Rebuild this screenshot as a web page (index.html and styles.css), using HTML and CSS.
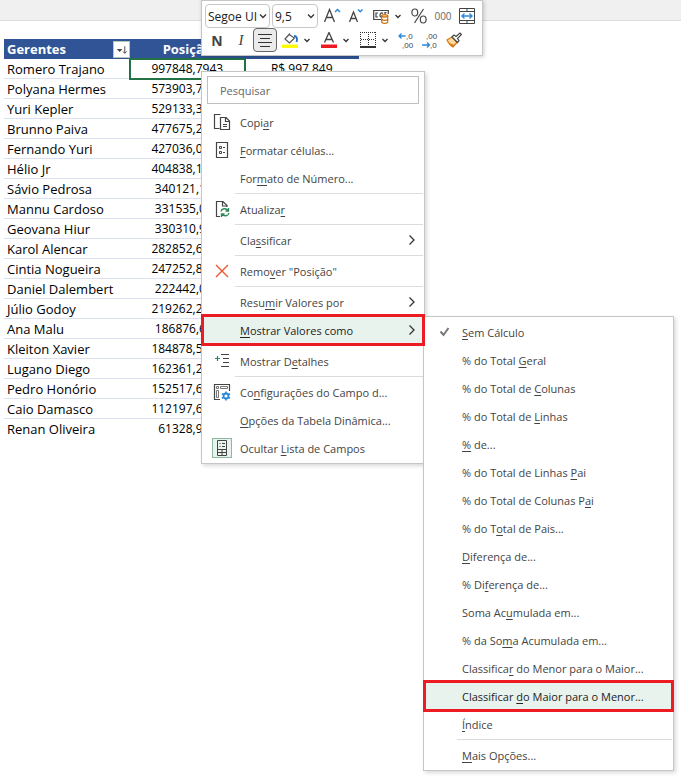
FILE: index.html
```html
<!DOCTYPE html>
<html lang="pt-BR">
<head>
  <meta charset="UTF-8">
  <title>Tabela Dinâmica</title>
  <link rel="stylesheet" href="styles.css">
</head>
<body>

  <div class="ribbon"></div>

  <table class="pivot">
    <thead>
      <tr>
        <th>
          <div class="head">
            Gerentes
            <button type="button" class="filter" aria-label="Filtrar">
              <svg width="16" height="16" viewBox="0 0 16 16"><path d="M3 7h6L6 10z" fill="#444"/><path d="M11.500 4v7.500M9.500 9.500l2 2 2-2" fill="none" stroke="#444"/></svg>
            </button>
          </div>
        </th>
        <th class="num">Posição</th>
        <th class="num">Valor</th>
      </tr>
    </thead>
    <tbody>
      <tr><td>Romero Trajano</td><td class="num selected">997848,7943</td><td class="num">R$ 997.849</td></tr>
      <tr><td>Polyana Hermes</td><td class="num">573903,7000</td><td></td></tr>
      <tr><td>Yuri Kepler</td><td class="num">529133,3000</td><td></td></tr>
      <tr><td>Brunno Paiva</td><td class="num">477675,2000</td><td></td></tr>
      <tr><td>Fernando Yuri</td><td class="num">427036,0000</td><td></td></tr>
      <tr><td>Hélio Jr</td><td class="num">404838,1000</td><td></td></tr>
      <tr><td>Sávio Pedrosa</td><td class="num">340121,100</td><td></td></tr>
      <tr><td>Mannu Cardoso</td><td class="num">331535,000</td><td></td></tr>
      <tr><td>Geovana Hiur</td><td class="num">330310,900</td><td></td></tr>
      <tr><td>Karol Alencar</td><td class="num">282852,6000</td><td></td></tr>
      <tr><td>Cintia Nogueira</td><td class="num">247252,8000</td><td></td></tr>
      <tr><td>Daniel Dalembert</td><td class="num">222442,000</td><td></td></tr>
      <tr><td>Júlio Godoy</td><td class="num">219262,2000</td><td></td></tr>
      <tr><td>Ana Malu</td><td class="num">186876,600</td><td></td></tr>
      <tr><td>Kleiton Xavier</td><td class="num">184878,5000</td><td></td></tr>
      <tr><td>Lugano Diego</td><td class="num">162361,2000</td><td></td></tr>
      <tr><td>Pedro Honório</td><td class="num">152517,6000</td><td></td></tr>
      <tr><td>Caio Damasco</td><td class="num">112197,6000</td><td></td></tr>
      <tr><td>Renan Oliveira</td><td class="num">61328,900</td><td></td></tr>
    </tbody>
  </table>

  <!-- Mini barra de ferramentas -->
  <div class="toolbar">
    <div class="tools">
      <div class="combo font">
        <select aria-label="Fonte"><option>Segoe UI</option></select>
        <svg width="8" height="8" viewBox="0 0 8 8"><path class="arrow" d="M1 2.500l3 3 3-3"/></svg>
      </div>
      <div class="combo size">
        <select aria-label="Tamanho da fonte"><option>9,5</option></select>
        <svg width="8" height="8" viewBox="0 0 8 8"><path class="arrow" d="M1 2.500l3 3 3-3"/></svg>
      </div>
      <button type="button" class="tool" aria-label="Aumentar fonte">
        <svg width="18" height="18" viewBox="0 0 18 18"><path d="M1.500 15L6.500 2.500l5 12.500M3.500 10.500h6.500" fill="none" stroke="#444" stroke-width="1.300"/><path d="M12 5l2.500-2.500L17 5" fill="none" stroke="#2b88d8" stroke-width="1.500"/></svg>
      </button>
      <button type="button" class="tool" aria-label="Diminuir fonte">
        <svg width="18" height="18" viewBox="0 0 18 18"><path d="M2.500 15L6.500 5l4 10M4 11.500h5" fill="none" stroke="#444" stroke-width="1.300"/><path d="M11 2.500l2.200 2.200L15.500 2.500" fill="none" stroke="#2b88d8" stroke-width="1.500"/></svg>
      </button>
      <button type="button" class="tool split" aria-label="Formato de contabilização">
        <svg width="16" height="16" viewBox="0 0 16 16"><path d="M8 11.500H.7v-9h14.600V6" fill="none" stroke="#444" stroke-width="1.200"/><path d="M5 5H3v4h2M10 5.500C9 4.500 7 5 7 7s1 2.500 1.500 2M12 6V4.500h1.500" fill="none" stroke="#444" stroke-width="1.200"/><path d="M8.700 7.800v6c0 2 6 2 6 0v-6" fill="#fff" stroke="#c8700a" stroke-width="1.200"/><ellipse cx="11.700" cy="7.800" rx="3" ry="1.300" fill="#f7c27a" stroke="#c8700a" stroke-width="1.200"/><path d="M8.700 11c0 1.700 6 1.700 6 0" fill="none" stroke="#c8700a" stroke-width="1.200"/></svg>
        <svg width="8" height="8" viewBox="0 0 8 8"><path class="arrow" d="M1.500 3L4 5.500 6.500 3"/></svg>
      </button>
      <button type="button" class="tool" aria-label="Porcentagem">
        <svg width="18" height="18" viewBox="0 0 18 18" fill="none" stroke="#444" stroke-width="1.200"><ellipse cx="4.800" cy="5.500" rx="2.900" ry="3.500"/><ellipse cx="13.200" cy="12.500" rx="2.900" ry="3.500"/><path d="M13.500 2L4.500 16"/></svg>
      </button>
      <button type="button" class="tool zeros">000</button>
      <button type="button" class="tool" aria-label="Mesclar e centralizar">
        <svg width="16" height="16" viewBox="0 0 16 16" fill="none"><path d="M.5.500h15v15H.5zM.5 3.500h15M.5 12.500h15M8 .5v3M8 12.500v3" stroke="#444"/><path d="M3 8h10M5.500 5.500L3 8l2.500 2.500M10.500 5.500L13 8l-2.500 2.500" stroke="#2b88d8" stroke-width="1.400"/></svg>
      </button>
    </div>
    <div class="tools">
      <button type="button" class="tool bold">N</button>
      <button type="button" class="tool italic">I</button>
      <button type="button" class="tool pressed" aria-label="Centralizar" aria-pressed="true">
        <svg width="16" height="16" viewBox="0 0 16 16" stroke="#333"><path d="M1 2.500h14M3 6.500h10M1 10.500h14M3 14.500h10"/></svg>
      </button>
      <button type="button" class="tool split" aria-label="Cor de preenchimento">
        <svg width="16" height="16" viewBox="0 0 16 16"><path d="M8 1.500L3 7l4.500 4L12.500 6 7 2.500" fill="none" stroke="#555" stroke-width="1.200"/><path d="M12 4c3 0 3.500 3 2.500 6" fill="none" stroke="#1f6fc0" stroke-width="1.800"/><path d="M0 12.500h16V16H0z" fill="#ff0"/></svg>
        <svg width="8" height="8" viewBox="0 0 8 8"><path class="arrow" d="M1.500 3L4 5.500 6.500 3"/></svg>
      </button>
      <button type="button" class="tool split" aria-label="Cor da fonte">
        <svg width="16" height="16" viewBox="0 0 16 16"><path d="M3.500 10.500L8 .5l4.500 10M5 7.500h6" fill="none" stroke="#444" stroke-width="1.300"/><path d="M0 12.500h16V16H0z" fill="#ed1c24"/></svg>
        <svg width="8" height="8" viewBox="0 0 8 8"><path class="arrow" d="M1.500 3L4 5.500 6.500 3"/></svg>
      </button>
      <button type="button" class="tool split" aria-label="Bordas">
        <svg width="16" height="16" viewBox="0 0 16 16" fill="none" stroke="#333"><path d="M0 .5h16M.5 0v14M15.500 0v14M8.500 2v12M1 7.500h14" stroke-dasharray="1 1"/><path d="M0 15h16" stroke="#000" stroke-width="1.600"/></svg>
        <svg width="8" height="8" viewBox="0 0 8 8"><path class="arrow" d="M1.500 3L4 5.500 6.500 3"/></svg>
      </button>
      <button type="button" class="tool" aria-label="Aumentar casas decimais">
        <svg class="decimals" width="18" height="20" viewBox="0 0 18 20"><text x="9" y="9">,0</text><text x="5" y="18">,00</text><path d="M8.500 6H2M4.500 3.500L2 6l2.500 2.500" fill="none" stroke="#2b88d8" stroke-width="1.300"/></svg>
      </button>
      <button type="button" class="tool" aria-label="Diminuir casas decimais">
        <svg class="decimals" width="18" height="20" viewBox="0 0 18 20"><text x="5" y="9">,00</text><text x="9" y="18">,0</text><path d="M1 15h7.500M6 12.500L8.500 15 6 17.500" fill="none" stroke="#2b88d8" stroke-width="1.300"/></svg>
      </button>
      <button type="button" class="tool" aria-label="Pincel de formatação">
        <svg width="16" height="16" viewBox="0 0 16 16"><path d="M1 8l5-3 5 5.500-4 4.500c-2-1-4-3-6-7z" fill="#fbd9a5" stroke="#d87a12" stroke-width="1.300"/><path d="M3.500 11l5 2-2 2z" fill="#d87a12"/><path d="M6 4.800l5.500 5.700 1.500-2-1.500-2L15.500 2.500 14 1l-4 3.500L8 3z" fill="#fff" stroke="#444" stroke-width="1.200"/></svg>
      </button>
    </div>
  </div>

  <!-- Menu de contexto -->
  <div class="menu context">
    <input type="text" class="search" placeholder="Pesquisar" aria-label="Pesquisar">
    <ul>
      <li><button type="button" class="item">
        <svg class="icon" width="18" height="18" viewBox="0 0 18 18" fill="none" stroke="#444"><path d="M6.500 15.500h-5V1.500h6M7.500 4.500h5.500l3.500 3.500v8.500h-9zM12.500 4.500v4h4M10 11.500h4M10 13.500h4" stroke-width="1.200"/></svg>
        <span>Copi<u>a</u>r</span></button></li>
      <li><button type="button" class="item">
        <svg class="icon" width="18" height="18" viewBox="0 0 18 18" fill="none" stroke="#444"><path d="M3.500 1.500h11v15h-11z" stroke-width="1.200"/><path d="M6.500 5.500h2v2h-2zM6.500 10.500h2v2h-2zM10 6.500h2M10 11.500h2"/></svg>
        <span><u>F</u>ormatar células...</span></button></li>
      <li><button type="button" class="item"><span>For<u>m</u>ato de Número...</span></button></li>
      <li class="line"></li>
      <li><button type="button" class="item">
        <svg class="icon" width="18" height="18" viewBox="0 0 18 18" fill="none"><path d="M7 16.500H3.500v-15h6.500l4 4V7M9.500 1.500V6H14" stroke="#444" stroke-width="1.200"/><path d="M8 11.500c.5-3 5-4 7-1M15.500 8v3h-3M16 13c-.5 3-5 4-7 1M8.500 17v-3h3" stroke="#2c8a5d" stroke-width="1.400"/></svg>
        <span>Atualiza<u>r</u></span></button></li>
      <li class="line"></li>
      <li><button type="button" class="item"><span>Cla<u>s</u>sificar</span>
        <svg class="more" width="8" height="12" viewBox="0 0 8 12"><path class="arrow" d="M1.500 1.500L6 6l-4.500 4.500"/></svg></button></li>
      <li class="line"></li>
      <li><button type="button" class="item">
        <svg class="icon" width="18" height="18" viewBox="0 0 18 18"><path d="M3 3l12 12M15 3L3 15" stroke="#e8562f" stroke-width="1.400"/></svg>
        <span>Remo<u>v</u>er "Posição"</span></button></li>
      <li class="line"></li>
      <li><button type="button" class="item"><span>Resu<u>m</u>ir Valores por</span>
        <svg class="more" width="8" height="12" viewBox="0 0 8 12"><path class="arrow" d="M1.500 1.500L6 6l-4.500 4.500"/></svg></button></li>
      <li><button type="button" class="item marked"><span><u>M</u>ostrar Valores como</span>
        <svg class="more" width="8" height="12" viewBox="0 0 8 12"><path class="arrow" d="M1.500 1.500L6 6l-4.500 4.500"/></svg></button></li>
      <li class="line"></li>
      <li><button type="button" class="item">
        <svg class="icon" width="18" height="18" viewBox="0 0 18 18"><path d="M8 2.500h8M10 6.500h6M10 10.500h6M8 14.500h8" stroke="#444"/><path d="M2 6.500h5M4.500 4v5" stroke="#2c8a5d" stroke-width="1.200"/></svg>
        <span>Mostrar D<u>e</u>talhes</span></button></li>
      <li class="line"></li>
      <li><button type="button" class="item">
        <svg class="icon" width="18" height="18" viewBox="0 0 18 18" fill="none"><path d="M7 16.500H1.500v-15h15V8" stroke="#444" stroke-width="1.200"/><path d="M3.500 3.500h2v2h-2zM7.500 3.500h7v2h-7zM3.500 7.500h2v7h-2z" stroke="#777"/><circle cx="13" cy="13" r="2.500" stroke="#2b88d8" stroke-width="1.800"/><path d="M13 8.500v2M13 15.500v2M9 10.700l2 1.200M15 14.200l2 1.200M9 15.300l2-1.200M15 11.900l2-1.200" stroke="#2b88d8" stroke-width="1.600"/></svg>
        <span>Co<u>n</u>figurações do Campo d...</span></button></li>
      <li><button type="button" class="item"><span><u>O</u>pções da Tabela Dinâmica...</span></button></li>
      <li><button type="button" class="item">
        <svg class="icon checked" width="18" height="18" viewBox="0 0 18 18" fill="none" stroke="#444"><path d="M4.500 1.500h9v15h-9zM4.500 10.500h9M4.500 13.500h9M9 10.500v6M6.500 4.500h1M9 4.500h3M6.500 7.500h1M9 7.500h3"/></svg>
        <span>Ocultar <u>L</u>ista de Campos</span></button></li>
    </ul>
  </div>

  <!-- Submenu "Mostrar Valores como" -->
  <div class="menu submenu">
    <ul>
      <li><button type="button" class="item">
        <svg class="icon" width="18" height="18" viewBox="0 0 18 18"><path d="M5.500 8.500l3 3.500 5-7" fill="none" stroke="#777" stroke-width="2"/></svg>
        <span><u>S</u>em Cálculo</span></button></li>
      <li><button type="button" class="item"><span>% do Total <u>G</u>eral</span></button></li>
      <li><button type="button" class="item"><span>% do Total de <u>C</u>olunas</span></button></li>
      <li><button type="button" class="item"><span>% do Total de <u>L</u>inhas</span></button></li>
      <li><button type="button" class="item"><span><u>%</u> de...</span></button></li>
      <li><button type="button" class="item"><span>% do Total de Linhas <u>P</u>ai</span></button></li>
      <li><button type="button" class="item"><span>% do Total de Colunas P<u>a</u>i</span></button></li>
      <li><button type="button" class="item"><span>% do T<u>o</u>tal de Pais...</span></button></li>
      <li><button type="button" class="item"><span><u>D</u>iferença de...</span></button></li>
      <li><button type="button" class="item"><span>% Di<u>f</u>erença de...</span></button></li>
      <li><button type="button" class="item"><span>Soma Ac<u>u</u>mulada em...</span></button></li>
      <li><button type="button" class="item"><span>% da So<u>m</u>a Acumulada em...</span></button></li>
      <li><button type="button" class="item"><span>Classifica<u>r</u> do Menor para o Maior...</span></button></li>
      <li><button type="button" class="item marked"><span>Classificar <u>d</u>o Maior para o Menor...</span></button></li>
      <li><button type="button" class="item"><span><u>Í</u>ndice</span></button></li>
      <li class="line"></li>
      <li><button type="button" class="item"><span><u>M</u>ais Opções...</span></button></li>
    </ul>
  </div>

</body>
</html>
```
FILE: styles.css
```css
* {
  box-sizing: border-box;
}
body {
  margin: 0;
  min-height: 100vh;
  background: #fff;
  font-family: "Open Sans", "Noto Sans", sans-serif;
  font-size: 12px;
  color: #444;
}
button, input, select {
  font: inherit;
  color: inherit;
}
button {
  border: none;
  background: none;
  padding: 0;
}
.ribbon {
  height: 21px;
  background: #f0f0f0;
  border-bottom: 1px solid #dcdcdc;
}

/* Tabela */
.pivot {
  margin: 18px 0 0 4px;
  width: 355px;
  table-layout: fixed;
  border-collapse: separate;
  border-spacing: 0;
  font-size: 13px;
  color: #000;
}
.pivot th, .pivot td {
  height: 20px;
  line-height: 18px;
  padding: 1px 3px 0;
  text-align: left;
  border-bottom: 1px solid #d9e1f2;
  white-space: nowrap;
}
.pivot th {
  background: #305496;
  border-color: #305496;
  color: #fff;
}
.pivot th:first-child {
  width: 126px;
  padding-right: 0;
}
.pivot .num {
  text-align: center;
}
.pivot td.num {
  font-size: 12px;
}
.pivot .selected {
  outline: 2px solid #217346;
  outline-offset: -1px;
}
.pivot tr:last-child td {
  border-bottom-color: transparent;
}
.pivot thead tr:last-child th {
  border-bottom-color: #305496;
}
.head {
  display: flex;
  align-items: center;
  justify-content: space-between;
}
.filter {
  display: flex;
  width: 17px;
  height: 17px;
  background: #fff;
  border: 1px solid #b5c7b9;
}

/* Barra de ferramentas */
.toolbar {
  position: absolute;
  left: 201px;
  top: 0;
  padding: 3px;
  background: #fff;
  border: 1px solid #c6c6c6;
  box-shadow: 1px 1px 4px rgba(0, 0, 0, 0.2);
}
.tools {
  display: flex;
  align-items: center;
  height: 24px;
}
.combo {
  display: flex;
  align-items: center;
  height: 24px;
  margin-right: 2px;
  padding-right: 2px;
  border: 1px solid #c8c8c8;
  border-radius: 4px;
  color: #222;
}
.combo select {
  flex: 1;
  min-width: 0;
  padding: 0 0 0 2px;
  border: none;
  background: none;
  appearance: none;
}
.font {
  width: 65px;
}
.size {
  width: 46px;
}
.arrow {
  fill: none;
  stroke: #333;
  stroke-width: 1.3;
}
.tool {
  display: flex;
  align-items: center;
  justify-content: center;
  width: 24px;
  height: 24px;
}
.split {
  width: 39px;
  gap: 5px;
}
.zeros {
  font-size: 10px;
  color: #666;
}
.bold {
  font-size: 14px;
  font-weight: bold;
}
.italic {
  font-family: "Liberation Serif", serif;
  font-size: 15px;
  font-style: italic;
}
.pressed {
  background: #ebebeb;
  border: 1px solid #666;
  border-radius: 4px;
}
.decimals {
  overflow: visible;
}
.decimals text {
  font-family: "Liberation Sans", sans-serif;
  font-size: 8px;
  fill: #444;
}

/* Menus */
.menu {
  position: absolute;
  padding: 1px;
  background: #fff;
  border: 1px solid #c6c6c6;
  box-shadow: 2px 2px 4px rgba(0, 0, 0, 0.15);
  font-size: 11px;
}
.menu ul {
  list-style: none;
  margin: 0;
  padding: 0;
}
.context {
  left: 201px;
  top: 71px;
  width: 224px;
}
.submenu {
  left: 423px;
  top: 316px;
  width: 251px;
  z-index: 1;
}
.search {
  display: block;
  width: 212px;
  height: 28px;
  margin: 3px 4px 4px;
  padding: 0 12px;
  border: 1px solid #c0c0c0;
}
.search::placeholder {
  color: #666;
}
.item {
  display: grid;
  grid-template-columns: 37px 1fr 15px;
  align-items: center;
  width: 100%;
  height: 28px;
  text-align: left;
  white-space: nowrap;
}
.item span {
  grid-column: 2;
  grid-row: 1;
}
.item u {
  text-underline-offset: 2px;
}
.icon {
  grid-column: 1;
  grid-row: 1;
  justify-self: center;
}
.checked {
  background: #e9f3ee;
  outline: 1px solid #8db8a2;
}
.more {
  grid-column: 3;
  grid-row: 1;
}
.marked {
  position: relative;
  z-index: 2;
  background: #e9f3ee;
  outline: 3px solid #ed1c24;
  outline-offset: -1px;
  color: #222;
}
.line {
  height: 3px;
  padding: 1px 0;
  margin-left: 32px;
  background: #dcdcdc content-box;
}
```
